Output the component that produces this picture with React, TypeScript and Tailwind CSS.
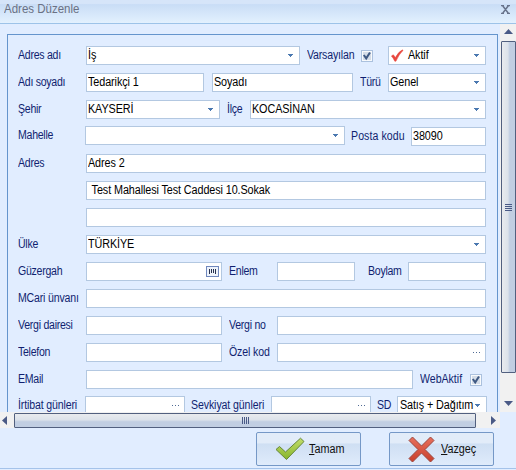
import { ReactNode } from 'react';
import clsx from 'clsx';

type FieldProps = {
    className?: string;
    value?: ReactNode;
    kind?: 'text' | 'combo' | 'dots' | 'barcode';
    low?: boolean;
};

function Field({ className, value, kind = 'text', low }: FieldProps) {
    return (
        <div
            className={clsx(
                'flex h-[19px] shrink-0 items-center overflow-hidden border border-[#b3c8e1] bg-white pl-px text-black',
                className,
            )}
        >
            <span className="min-w-0 flex-1 whitespace-pre tracking-[-0.1px]">
                <span className={clsx('block w-fit origin-left scale-x-[0.9]', low ? 'leading-[17px]' : 'pb-px leading-[16px]')}>
                    {value}
                </span>
            </span>
            {kind === 'combo' && (
                <span className="relative flex h-full w-[12px] shrink-0 items-center bg-white pl-px">
                    <svg width="5" height="3" viewBox="0 0 5 3" shapeRendering="crispEdges">
                        <path d="M0 0h5v1h-1v1h-1v1h-1v-1h-1v-1h-1z" fill="#4a78b0"/>
                    </svg>
                </span>
            )}
            {kind === 'dots' && (
                <svg width="8" height="1" viewBox="0 0 8 1" className="mr-[4px] shrink-0" shapeRendering="crispEdges">
                    <path d="M0 0h1v1h-1zM3 0h1v1h-1zM6 0h1v1h-1z" fill="#4f6a94"/>
                </svg>
            )}
            {kind === 'barcode' && (
                <svg width="13" height="11" viewBox="0 0 13 11" className="mr-[2px] shrink-0" shapeRendering="crispEdges">
                    <rect x=".5" y=".5" width="12" height="10" fill="#eef3fb" stroke="#7088bd"/>
                    <path d="M3 3h1v5h-1zM5 3h1v4h-1zM7 3h1v4h-1zM9 3h1v5h-1z" fill="#26304d"/>
                </svg>
            )}
        </div>
    );
}

function Label({ className, children }: { className?: string; children: ReactNode }) {
    return (
        <span className={clsx('shrink-0 whitespace-nowrap leading-[18px]', className)}>
            <span className="block w-fit origin-left scale-x-[0.88]">{children}</span>
        </span>
    );
}

function Row({ className, children }: { className?: string; children?: ReactNode }) {
    return <div className={clsx('flex shrink-0 items-start', className ?? 'h-[27px]')}>{children}</div>;
}

function Checkbox({ className }: { className?: string }) {
    return (
        <svg width="12" height="12" viewBox="0 0 12 12" className={clsx('shrink-0', className)}>
            <rect x=".5" y=".5" width="11" height="11" fill="#f8fafc" stroke="#abc1de"/>
            <rect x="2" y="2" width="8" height="8" fill="#d5dde8"/>
            <path d="M2.800 5L5.200 8.400L9 2.500" fill="none" stroke="#3f5983" strokeWidth="2"/>
        </svg>
    );
}

function Arrow({ className, d }: { className?: string; d: string }) {
    return (
        <svg width="9" height="9" viewBox="0 0 9 9" className={clsx('shrink-0', className)}>
            <path d={d} fill="#4a5a86"/>
        </svg>
    );
}

function DialogButton({ icon, children }: { icon: ReactNode; children: ReactNode }) {
    return (
        <button className="flex h-[34px] w-[105px] shrink-0 items-center rounded-[2px] border border-[#7598c7] bg-linear-to-b from-[#e2ecf9] from-30% via-[#cfdff3] via-35% to-[#dfebfb] text-[12px] tracking-normal text-[#111]">
            {icon}
            <span className="origin-left scale-x-[0.9]">{children}</span>
        </button>
    );
}

export default function App() {
    return (
        <main className="flex h-[470px] w-[516px] flex-col overflow-hidden bg-[#e1edff] font-['Liberation_Sans',sans-serif] text-[12px] tracking-[-0.3px] text-[#101f70]">
            <header className="flex h-6 shrink-0 items-start justify-between border-b border-[#9dc3e8] bg-linear-to-b from-[#d6e5f9] from-15% via-[#c9ddf6] via-20% to-[#e3f1fe] pl-1 pr-[6px] text-[#6a7184]">
                <span className="origin-left scale-x-[0.92] text-[12.5px] leading-[18px] tracking-normal">Adres Düzenle</span>
                <svg width="9" height="9" viewBox="0 0 9 9" className="mt-[5px]">
                    <path d="M0 .5h3M6 .5h3M0 8.5h3M6 8.5h3M1.5 .5l6 8M7.5 .5l-6 8" fill="none" stroke="#69748c" strokeWidth="1.5"/>
                </svg>
            </header>

            <div className="flex h-[388px] shrink-0">
                <div className="flex w-[500px] shrink-0 flex-col">
                    <section className="ml-[7px] mt-[10px] flex h-[378px] w-[491px] flex-col overflow-hidden border-x border-t border-[#6595cd] pl-[10px] pt-[11px]">
                        <Row>
                            <Label className="w-[68px]">Adres adı</Label>
                            <Field className="w-[214px]" value="İş" kind="combo"/>
                            <Label className="ml-[7px] w-[54px] tracking-[-0.2px]">Varsayılan</Label>
                            <Checkbox className="mt-1"/>
                            <Field
                                className="ml-[15px] w-[98px]"
                                kind="combo"
                                low
                                value={
                                    <span className="flex items-center gap-[5px] pl-px">
                                        <svg width="14" height="13" viewBox="0 0 13 13" preserveAspectRatio="none">
                                            <path d="M.5 7l2-1.2L4.700 8.500Q7.500 3 12 .8L12.500 1.500Q8.500 5 5.200 12.200H4Q2.500 9 .5 7z" fill="#e8483f" stroke="#e8483f" strokeWidth=".5"/>
                                        </svg>
                                        Aktif
                                    </span>
                                }
                            />
                        </Row>
                        <Row>
                            <Label className="w-[68px]">Adı soyadı</Label>
                            <Field className="w-[118px]" value="Tedarikçi 1"/>
                            <Field className="ml-2 w-[141px]" value="Soyadı"/>
                            <Label className="ml-[7px] w-[28px]">Türü</Label>
                            <Field className="w-[98px]" value="Genel" kind="combo" low/>
                        </Row>
                        <Row className="h-[26px]">
                            <Label className="w-[68px]">Şehir</Label>
                            <Field className="w-[134px]" value="KAYSERİ" kind="combo"/>
                            <Label className="ml-[7px] w-[23px]">İlçe</Label>
                            <Field className="w-[236px]" value="KOCASİNAN" kind="combo"/>
                        </Row>
                        <Row className="h-[28px]">
                            <Label className="w-[67px]">Mahelle</Label>
                            <Field className="w-[260px]" kind="combo"/>
                            <Label className="ml-[6px] mt-px w-[60px] tracking-[0.1px]">Posta kodu</Label>
                            <Field className="mt-px w-[75px]" value="38090"/>
                        </Row>
                        <Row>
                            <Label className="w-[68px]">Adres</Label>
                            <Field className="w-[400px]" value="Adres 2"/>
                        </Row>
                        <Row className="h-[27px] pl-[68px]">
                            <Field className="w-[400px]" value={<span className="pl-px"> Test Mahallesi Test Caddesi 10.Sokak</span>}/>
                        </Row>
                        <Row className="h-[27px] pl-[68px]">
                            <Field className="w-[400px]"/>
                        </Row>
                        <Row>
                            <Label className="w-[68px]">Ülke</Label>
                            <Field className="w-[400px]" value="TÜRKİYE" kind="combo"/>
                        </Row>
                        <Row>
                            <Label className="w-[68px]">Güzergah</Label>
                            <Field className="w-[136px]" kind="barcode"/>
                            <Label className="ml-[7px] w-[48px]">Enlem</Label>
                            <Field className="w-[78px]"/>
                            <Label className="ml-[13px] w-[40px]">Boylam</Label>
                            <Field className="w-[78px]"/>
                        </Row>
                        <Row>
                            <Label className="w-[68px] tracking-[-0.2px]">MCari ünvanı</Label>
                            <Field className="w-[400px]"/>
                        </Row>
                        <Row>
                            <Label className="w-[68px]">Vergi dairesi</Label>
                            <Field className="w-[136px]"/>
                            <Label className="ml-[7px] w-[48px]">Vergi no</Label>
                            <Field className="w-[209px]"/>
                        </Row>
                        <Row>
                            <Label className="w-[68px]">Telefon</Label>
                            <Field className="w-[136px]"/>
                            <Label className="ml-[7px] w-[48px] tracking-[-0.15px]">Özel kod</Label>
                            <Field className="w-[209px]" kind="dots"/>
                        </Row>
                        <Row className="h-[26px]">
                            <Label className="w-[68px]">EMail</Label>
                            <Field className="w-[327px]"/>
                            <Label className="ml-[7px] w-[50px] tracking-normal">WebAktif</Label>
                            <Checkbox className="mt-1"/>
                        </Row>
                        <Row className="h-4">
                            <Label className="w-[67px] tracking-[-0.15px]">İrtibat günleri</Label>
                            <Field className="w-[100px]" kind="dots"/>
                            <Label className="ml-[6px] w-[80px] tracking-[-0.1px]">Sevkiyat günleri</Label>
                            <Field className="w-[100px]" kind="dots"/>
                            <Label className="ml-[6px] w-[20px]">SD</Label>
                            <Field className="w-[90px]" value={<span className="pl-px">Satış + Dağıtım</span>} kind="combo" low/>
                        </Row>
                    </section>
                </div>
                <div className="flex w-4 flex-col items-center bg-[#f1f1f1] pl-px">
                    <Arrow className="mt-[3px]" d="M0 7L4.500 2L9 7z"/>
                    <div className="mt-[5px] flex h-[332px] w-[15px] shrink-0 flex-col items-center justify-center gap-px rounded-[1px] border border-[#52607f] bg-linear-to-r from-[#e9ebee] via-[#dce2ea] via-45% to-[#c1cee2] to-60%">
                        <i className="h-px w-[7px] bg-[#4a5a86]"/>
                        <i className="h-px w-[7px] bg-[#4a5a86]"/>
                        <i className="h-px w-[7px] bg-[#4a5a86]"/>
                        <i className="h-px w-[7px] bg-[#4a5a86]"/>
                    </div>
                    <Arrow className="mt-[26px]" d="M0 2L4.500 7L9 2z"/>
                </div>
            </div>

            <div className="flex h-4 w-[500px] shrink-0 items-center bg-[#f1f1f1]">
                <Arrow className="ml-px" d="M6 0L1 4.500L6 9z"/>
                <div className="ml-1 flex h-[15px] w-[462px] shrink-0 items-center justify-center gap-px rounded-[1px] border border-[#52607f] bg-linear-to-b from-[#e9ebee] via-[#dce2ea] via-45% to-[#c1cee2] to-60%">
                    <i className="h-[7px] w-px bg-[#4a5a86]"/>
                    <i className="h-[7px] w-px bg-[#4a5a86]"/>
                    <i className="h-[7px] w-px bg-[#4a5a86]"/>
                    <i className="h-[7px] w-px bg-[#4a5a86]"/>
                </div>
                <Arrow className="ml-[13px]" d="M2 0L7 4.500L2 9z"/>
            </div>

            <footer className="flex h-[41px] shrink-0 gap-[28px] border-b border-[#a5c3ea] pl-[256px] pt-1">
                <DialogButton
                    icon={
                        <svg width="30" height="24" viewBox="0 0 30 24" className="ml-[18px] mr-[4px] shrink-0">
                            <defs>
                                <linearGradient id="ok" x1="0" y1="0" x2="0" y2="1">
                                    <stop stopColor="#c3dd6b"/>
                                    <stop offset="1" stopColor="#86b52c"/>
                                </linearGradient>
                            </defs>
                            <path d="M1 12.500L4.500 9.500L10.500 15L25.500 1.200L29 4.500L11.500 22.500z" fill="url(#ok)" stroke="#66873a"/>
                        </svg>
                    }
                >
                    <u>T</u>amam
                </DialogButton>
                <DialogButton
                    icon={
                        <svg width="27" height="27" viewBox="0 0 27 27" className="ml-[18px] mr-[6px] shrink-0">
                            <defs>
                                <linearGradient id="cancel" x1="0" y1="0" x2="0" y2="1">
                                    <stop stopColor="#e8705d"/>
                                    <stop offset="1" stopColor="#c83f2c"/>
                                </linearGradient>
                            </defs>
                            <path d="M1 4.500L4.500 1L13.500 10L22.500 1L26 4.500L17 13.500L26 22.500L22.500 26L13.500 17L4.500 26L1 22.500L10 13.500z" fill="url(#cancel)" stroke="#9a473f"/>
                        </svg>
                    }
                >
                    <u>V</u>azgeç
                </DialogButton>
            </footer>
        </main>
    );
}
